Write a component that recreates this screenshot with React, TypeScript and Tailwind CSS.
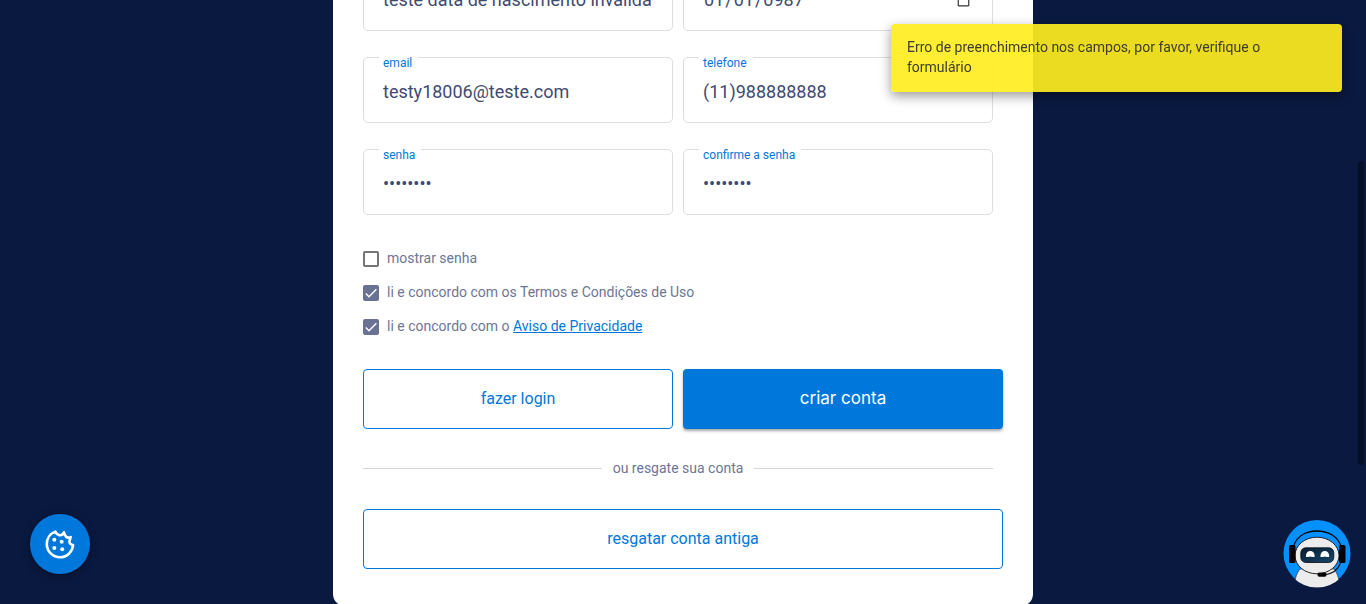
import { useState, type InputHTMLAttributes, type ReactNode } from "react";

type FieldProps = InputHTMLAttributes<HTMLInputElement> & { id: string; label: string };

function Field({ id, label, ...rest }: FieldProps) {
  return (
    <div className="relative h-[66px] min-w-0 rounded-[5px] border border-[#dedede] px-[19px] pt-[22px]">
      <label
        htmlFor={id}
        className="absolute -top-1 left-[15px] bg-white pr-1.5 pl-1 text-xs leading-[18px] text-[#0078db]"
      >
        {label}
      </label>
      <input
        id={id}
        className="block h-6 w-full bg-transparent text-lg leading-6 text-[#3f4a70] outline-none [&::-webkit-calendar-picker-indicator]:size-[15px] [&::-webkit-calendar-picker-indicator]:opacity-80"
        {...rest}
      />
    </div>
  );
}

type CheckProps = { id: string; children: ReactNode; checked?: boolean; onChange?: (v: boolean) => void };

function Check({ id, children, checked, onChange }: CheckProps) {
  return (
    <div className="flex h-5 items-center gap-2">
      <span className="mt-0.5 grid size-4 shrink-0">
        <input
          id={id}
          type="checkbox"
          checked={checked}
          onChange={(e) => onChange?.(e.target.checked)}
          className="peer col-start-1 row-start-1 size-4 appearance-none rounded-xs border-2 border-[#757575] checked:border-[#697293] checked:bg-[#697293]"
        />
        <svg
          viewBox="0 0 16 16"
          className="pointer-events-none col-start-1 row-start-1 hidden size-4 peer-checked:block"
          fill="none"
          stroke="#fff"
          strokeWidth="1.4"
        >
          <path d="M2.8 8.4 6 11.7 13.4 4.2" />
        </svg>
      </span>
      <label htmlFor={id} className="text-sm leading-5 text-[#6e7694]">
        {children}
      </label>
    </div>
  );
}

function CookieIcon() {
  return (
    <svg viewBox="0 0 30 30" className="size-[30px]" fill="none" aria-hidden="true">
      <path
        d="M10.3 2.600C5.200 4.500 1.800 9.300 1.800 15c0 7.400 5.900 13.200 13.200 13.200 7 0 12.500-5.300 13.100-12.200C25.800 16 24.300 14.400 24.400 12.300L25.600 8.100C23.800 9 22 8.700 20.900 7.500 20.200 6.600 19.500 5 19 3.300 18.200 5.400 16.400 6.500 14.300 6.100 12.300 5.800 11.100 4.500 10.300 2.600Z"
        stroke="#fff"
        strokeWidth="2.600"
        strokeLinejoin="round"
      />
      <g fill="#fff">
        <circle cx="9.300" cy="10.700" r="2" />
        <circle cx="16.700" cy="12.700" r="2" />
        <circle cx="9.300" cy="19" r="2" />
        <circle cx="17.200" cy="20.300" r="2" />
      </g>
    </svg>
  );
}

function BotIcon() {
  return (
    <svg viewBox="0 0 68 68" className="size-[68px]" aria-hidden="true">
      <defs>
        <clipPath id="bot-disc">
          <circle cx="34" cy="34" r="33.500" />
        </clipPath>
        <linearGradient id="bot-visor" x1="0" x2="1" y1="0" y2="1">
          <stop offset="0" stopColor="#0a1c2e" />
          <stop offset="1" stopColor="#16456a" />
        </linearGradient>
      </defs>
      <circle cx="34" cy="33.500" r="33.500" fill="#0590ff" />
      <g clipPath="url(#bot-disc)">
        <path d="M17 49C14 53 12 57 11 68H57C56 57 54 53 51 49Z" fill="#ececec" stroke="#222" strokeWidth=".6" />
        <path d="M10.500 26C14 16 23 11 34 11S54.500 16 58 26" fill="none" stroke="#050505" strokeWidth="1.300" />
        <ellipse cx="34" cy="35.500" rx="22" ry="18.300" fill="#ececec" stroke="#111" strokeWidth=".9" />
      </g>
      <rect x="6" y="25" width="6.500" height="18" rx="1.500" fill="#050505" />
      <rect x="56" y="25" width="6.500" height="18" rx="1.500" fill="#050505" />
      <rect x="17.800" y="27.800" width="33" height="14.700" rx="5" fill="url(#bot-visor)" stroke="#050b14" strokeWidth=".8" />
      <path d="M23 37v-1.500a4.300 4.500 0 0 1 8.600 0V37h-2.600q-1.700-1.200-3.400 0Z" fill="#fff" />
      <path d="M37.500 37v-1.500a4.300 4.500 0 0 1 8.600 0V37h-2.600q-1.700-1.200-3.400 0Z" fill="#fff" />
      <path d="M57.500 43C55 50 49 54 41 55" fill="none" stroke="#111" strokeWidth="1.100" />
      <rect x="34.500" y="52.500" width="9" height="4.200" rx="1.800" fill="#050505" />
    </svg>
  );
}

const outlineButton =
  "h-[60px] rounded-sm border border-[#0078db] bg-white text-base text-[#0078db] hover:bg-[#f2f9ff]";

export default function App() {
  const [show, setShow] = useState(false);
  const [terms, setTerms] = useState(true);
  const [privacy, setPrivacy] = useState(true);
  const passwordType = show ? "text" : "password";

  return (
    <div className="h-screen overflow-hidden bg-[#0a1940] font-['Roboto',sans-serif]">
      <main className="mx-auto -mt-[65px] max-w-[700px] rounded-xl bg-white px-[30px] pt-[30px] pb-[37px]">
        <form onSubmit={(e) => e.preventDefault()}>
          <div className="grid grid-cols-2 gap-x-2.5 gap-y-[26px] pr-2.5">
            <Field id="nome" label="nome" type="text" defaultValue="teste data de nascimento invalida" />
            <Field id="nascimento" label="data de nascimento" type="date" defaultValue="0987-01-01" />
            <Field id="email" label="email" type="email" defaultValue="testy18006@teste.com" />
            <Field id="telefone" label="telefone" type="tel" defaultValue="(11)988888888" />
            <Field id="senha" label="senha" type={passwordType} defaultValue="teste123" />
            <Field id="confirma" label="confirme a senha" type={passwordType} defaultValue="teste123" />
          </div>

          <div className="mt-[33px] flex flex-col gap-3.5">
            <Check id="mostrar" checked={show} onChange={setShow}>
              mostrar senha
            </Check>
            <Check id="termos" checked={terms} onChange={setTerms}>
              li e concordo com os Termos e Condições de Uso
            </Check>
            <Check id="privacidade" checked={privacy} onChange={setPrivacy}>
              li e concordo com o{" "}
              <a href="#privacidade" className="text-[#0078db] underline">
                Aviso de Privacidade
              </a>
            </Check>
          </div>

          <div className="mt-[33px] flex gap-2.5">
            <button type="button" className={`${outlineButton} w-[310px]`}>
              fazer login
            </button>
            <button
              type="submit"
              className="h-[60px] flex-1 rounded-sm bg-[#0078db] font-['Inter',sans-serif] text-[17px] text-white shadow-[0_2px_3px_rgba(0,0,0,0.35)]"
            >
              criar conta
            </button>
          </div>
        </form>

        <div className="mt-[29px] flex items-center gap-[11px] pr-2.5">
          <span className="h-px flex-1 bg-[#d6d6d6]" />
          <span className="text-sm leading-5 text-[#6e7694]">ou resgate sua conta</span>
          <span className="h-px flex-1 bg-[#d6d6d6]" />
        </div>

        <button type="button" className={`${outlineButton} mt-[31px] w-full`}>
          resgatar conta antiga
        </button>
      </main>

      <div
        role="alert"
        className="fixed top-6 right-6 w-[451px] rounded-sm bg-[#ffed1f]/92 px-4 pt-[13px] pb-[15px] text-sm leading-5 text-[#333]/95 shadow-[0_4px_12px_rgba(0,0,0,0.4)]"
      >
        Erro de preenchimento nos campos, por favor, verifique o formulário
      </div>

      <div className="fixed top-[161px] right-0.5 h-[304px] w-1.5 rounded-full bg-[#050f28]" />

      <button
        type="button"
        aria-label="Preferências de cookies"
        className="fixed bottom-[30px] left-[30px] grid size-[60px] place-items-center rounded-full bg-[#0078db] shadow-[0_2px_10px_rgba(0,0,0,0.35)]"
      >
        <CookieIcon />
      </button>

      <button type="button" aria-label="Assistente virtual" className="fixed right-[15px] bottom-4 rounded-full">
        <BotIcon />
      </button>
    </div>
  );
}
